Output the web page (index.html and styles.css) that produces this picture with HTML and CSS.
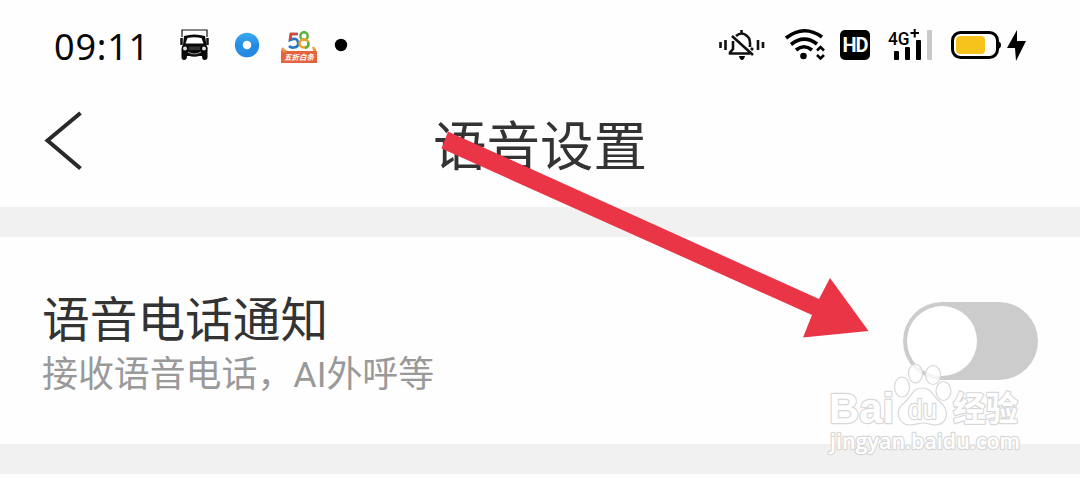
FILE: index.html
```html
<!DOCTYPE html>
<html lang="zh-CN">
<head>
<meta charset="utf-8">
<title>语音设置</title>
<link rel="stylesheet" href="styles.css">
</head>
<body>
<div class="screen">
  <div class="status">
    <span class="clock">09:11</span>
    <svg class="truck" width="30" height="32" viewBox="0 0 30 32">
      <path d="M2 8V1H27V8" fill="#fff" stroke="#111" stroke-width="1.2"/>
      <path d="M4 7Q14 4 25 7L26.500 16Q28 18 27.500 22V29Q27 31 24.500 31Q22 31 22 27H7Q7 31 4 31Q1.500 31 1.500 28V20Q1.500 17 3 16Z" fill="#090909"/>
      <path d="M7.500 9Q14 7.500 21.500 9L23.500 14.500H5.500Z" fill="#fff"/>
      <path d="M1.500 9V16M27.500 9V16" stroke="#111" stroke-width="2.500"/>
      <circle cx="5" cy="19.500" r="2" fill="#ddd"/><circle cx="24" cy="19.500" r="2" fill="#ddd"/>
      <path d="M9 17.500H20V21H9Z" fill="#333"/>
      <path d="M8 23Q14 27 21 23" fill="none" stroke="#aaa" stroke-width="1"/>
      <path d="M9 25.500Q14 28 20 25.500" fill="none" stroke="#111" stroke-width="2"/>
    </svg>
    <svg class="ring" width="26" height="26" viewBox="0 0 26 26">
      <defs><linearGradient id="blue" x1="0" y1="0" x2="0" y2="1"><stop stop-color="#38a9ef"/><stop offset=".5" stop-color="#278ee6"/><stop offset="1" stop-color="#2b8fe3"/></linearGradient></defs>
      <circle cx="13" cy="13" r="12.2" fill="url(#blue)"/>
      <path d="M13 13L25 12A12 12 0 0 1 3 20Q16 22 17 14Z" fill="#1779dc" opacity=".3"/>
      <circle cx="13" cy="13" r="4.3" fill="#fff"/>
    </svg>
    <svg class="promo" width="38" height="34" viewBox="0 0 38 34">
      <path d="M17 4H11L10 10Q17 7 18 12T14 17.500Q11 18 9 16" fill="none" stroke="#2475c6" stroke-width="2.600"/>
      <path d="M18 4H11L10 10" fill="none" stroke="#d5453c" stroke-width="2.600"/>
      <ellipse cx="24" cy="6" rx="3.700" ry="3.800" fill="none" stroke="#53b33c" stroke-width="2.400"/>
      <ellipse cx="24" cy="13.500" rx="4.500" ry="4" fill="none" stroke="#efa126" stroke-width="2.400"/>
      <path d="M28 12Q30 17 25 18" fill="none" stroke="#53b33c" stroke-width="2.400"/>
      <path d="M3 18L7 21H33L35 18L37 22V33H1V21Z" fill="#e4633c"/>
      <path d="M2 18L5 22M33 17L35 21" stroke="#ef9b42" stroke-width="2.500"/>
      <text x="19" y="30" class="promo-text">五折白条</text>
    </svg>
    <svg class="dot" width="14" height="14" viewBox="0 0 14 14"><circle cx="7" cy="7" r="6.200"/></svg>
    <svg class="bell" width="46" height="32" viewBox="0 0 46 32">
      <g fill="none" stroke="#111" stroke-width="2.600">
        <path d="M1.500 13V19M6.500 11V21M39 11V21M44 13V19"/>
        <path d="M14 12V20L11 23.500V24.500H31M17 7Q23 2 28 7Q31 9 31 14V18M22.500 1V5M13 7L34 26M32 19L34 21"/>
      </g>
      <path d="M20 27H26Q25 31 23 31T20 27Z"/>
    </svg>
    <svg class="wifi" width="40" height="32" viewBox="0 0 40 32">
      <g fill="none" stroke="#000" stroke-width="3.600">
        <path d="M1 9Q19-5 37 8"/><path d="M6 15.500Q19 5 32 15"/><path d="M11 21Q19 14.500 27 21"/>
      </g>
      <circle cx="18.500" cy="27" r="3.300"/>
      <path d="M32 21.500L35.500 18L39 21.500M32 26L35.500 29.500L39 26" fill="none" stroke="#000" stroke-width="2.600"/>
    </svg>
    <span class="hd">HD</span>
    <svg class="signal" width="44" height="32" viewBox="0 0 44 32">
      <text x="0" y="15.500" class="net" textLength="21.500" lengthAdjust="spacingAndGlyphs">4G</text>
      <path d="M22.500 4H31M26.700 0V8.500" stroke="#000" stroke-width="2"/>
      <rect x="6" y="22" width="5" height="9" rx="1"/><rect x="17" y="18" width="5" height="13" rx="1"/><rect x="28" y="11" width="5" height="20" rx="1"/><rect x="39" y="1" width="5" height="30" rx="1" fill="#c9c9c9"/>
    </svg>
    <svg class="battery" width="50" height="28" viewBox="0 0 50 28">
      <rect x="1.500" y="1.500" width="45" height="25" rx="8" fill="#fff" stroke="#000" stroke-width="3"/>
      <path d="M47 10Q50 11 50 14T47 18Z"/><rect x="5" y="5" width="29" height="18" rx="4" fill="#f5c31c"/>
    </svg>
    <svg class="bolt" width="19" height="31" viewBox="0 0 19 31"><path d="M10 0L0 18H8L9 31L19 11H10Z"/></svg>
  </div>
  <header class="header">
    <svg class="back" width="38" height="60" viewBox="0 0 38 60"><path d="M36.500 2L3.500 29.500L36.500 57.500" fill="none" stroke="#292929" stroke-width="4"/></svg>
    <h1 class="title">语音设置</h1>
  </header>
  <main class="list">
    <section class="row">
      <div class="texts">
        <h2 class="name">语音电话通知</h2>
        <p class="hint">接收语音电话，<span class="latin">AI</span>外呼等</p>
      </div>
      <div class="switch"><span class="knob"></span></div>
    </section>
  </main>
  <svg class="arrow" width="1080" height="479" viewBox="0 0 1080 479"><path d="M448 131.500L819 299L830 278L868.500 331L803 337.500L812 315L441.500 148.500Z" fill="#e93546"/></svg>
  <svg class="watermark" width="210" height="100" viewBox="820 360 210 100">
    <g class="mark">
      <text x="829" y="423" class="brand" textLength="65" lengthAdjust="spacingAndGlyphs">Bai</text>
      <ellipse cx="902" cy="387" rx="7.500" ry="10"/><ellipse cx="915.500" cy="373.500" rx="7" ry="9.500"/><ellipse cx="933" cy="375" rx="7.500" ry="9.500"/><ellipse cx="943.500" cy="391" rx="7.500" ry="9.500"/>
      <path d="M922 388C912 388 911 398 904 403C894 410 898 425 910 425C916 425 918 423 923 423C929 423 931 425 936 425C948 424 950 410 940 402C933 397 932 388 922 388Z"/>
      <text x="908" y="419" class="du" textLength="29" lengthAdjust="spacingAndGlyphs">du</text>
      <text x="953" y="421" class="exp" textLength="65" lengthAdjust="spacingAndGlyphs">经验</text>
      <text x="830" y="449" class="url" textLength="190" lengthAdjust="spacingAndGlyphs">jingyan.baidu.com</text>
    </g>
  </svg>
</div>
</body>
</html>
```

FILE: styles.css
```css
* { box-sizing: border-box; }
body {
  margin: 0;
  background: #fefefe;
  font-family: "Noto Sans", "Noto Sans CJK SC", sans-serif;
}
.screen {
  position: relative;
  width: 1080px;
  height: 479px;
  overflow: hidden;
}
.status {
  display: flex;
  align-items: center;
  height: 90px;
  padding: 0 54px 0 54px;
}
.status svg { flex: none; overflow: visible; }
.clock {
  width: 126px;
  font-family: "Noto Sans", sans-serif;
  font-size: 36px;
  line-height: 40px;
  letter-spacing: .8px;
  color: #080808;
  padding-top: 4px;
  white-space: nowrap;
}
.ring { margin-left: 24px; }
.promo { margin-left: 20px; margin-top: 4px; }
.promo-text {
  font: italic bold 7.500px "Noto Sans CJK SC", sans-serif;
  fill: #fff;
  text-anchor: middle;
}
.dot { margin-left: 16px; }
.bell { margin-left: auto; }
.wifi { margin-left: 20px; }
.hd {
  width: 30px;
  height: 30px;
  margin-left: 15px;
  border-radius: 5px;
  background: #000;
  color: #fff;
  font: bold 20px/30px "Roboto", sans-serif;
  letter-spacing: -1px;
  text-align: center;
}
.signal { margin-left: 18px; }
.net { font: 500 19px "Roboto", sans-serif; }
.battery { margin-left: 19px; }
.bolt { margin-left: 6px; }
.header {
  display: grid;
  grid-template-columns: 38px 1fr 38px;
  align-items: center;
  height: 117px;
  padding: 0 44px;
}
.back { margin-top: -15px; }
.title {
  margin: -12px 0 0;
  font: 400 53.500px/60px "Noto Sans CJK SC", sans-serif;
  color: #333;
  text-align: center;
}
.list {
  border-top: 30px solid #f1f1f1;
  border-bottom: 30px solid #f1f1f1;
}
.row {
  display: flex;
  justify-content: space-between;
  height: 207px;
  padding: 50px 42px 0 42px;
}
.name {
  margin: 0;
  font: 400 47.700px/60px "Noto Sans CJK SC", sans-serif;
  color: #333;
}
.hint {
  margin: -1px 0 0;
  font: 400 35.900px/50px "Noto Sans CJK SC", sans-serif;
  color: #999;
}
.latin { font-family: "Roboto", sans-serif; }
.switch {
  width: 135px;
  height: 78px;
  margin-top: 15px;
  padding: 4px;
  border-radius: 39px;
  background: #ccc;
}
.knob {
  display: block;
  width: 70px;
  height: 70px;
  border-radius: 50%;
  background: #fff;
}
.arrow, .watermark { position: absolute; }
.arrow { left: 0; top: 0; }
.watermark { left: 820px; top: 360px; }
.mark {
  fill: rgba(255, 255, 255, .78);
  stroke: #d8d8d8;
  stroke-width: 1.200;
}
.mark text {
  fill: #fff;
  stroke-width: 2.400;
  stroke-linejoin: round;
  paint-order: stroke;
}
.brand { font: bold 43px "Liberation Sans", sans-serif; }
.du { font: 27px "Liberation Sans", sans-serif; }
.exp { font: bold 34px "Noto Sans CJK SC", sans-serif; }
.url { font: 600 22px "Open Sans", sans-serif; }
```
